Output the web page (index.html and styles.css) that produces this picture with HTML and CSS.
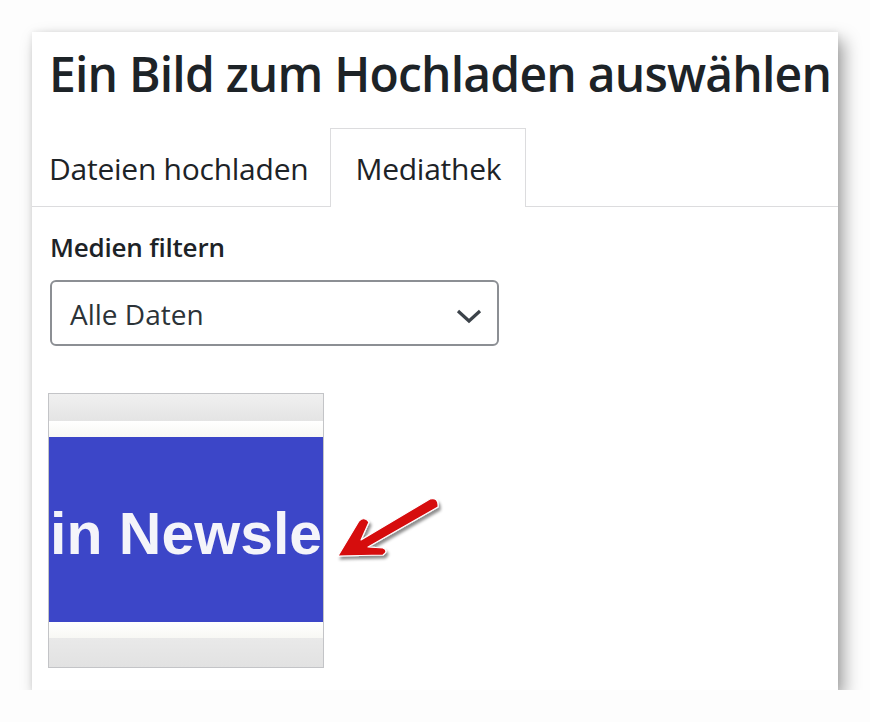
FILE: index.html
```html
<!DOCTYPE html>
<html lang="de">
<head>
    <meta charset="UTF-8">
    <title>Ein Bild zum Hochladen auswählen</title>
    <link rel="stylesheet" href="styles.css">
</head>
<body>

    <!-- Dialog -->
    <div class="dialog">
        <h1 class="title">Ein Bild zum Hochladen auswählen</h1>

        <!-- Tabs -->
        <div class="tabs">
            <div class="tab">Dateien hochladen</div>
            <div class="tab active">Mediathek</div>
        </div>

        <!-- Filter -->
        <div class="filter">
            <label class="filter-label">Medien filtern</label>
            <div class="select">
                <span>Alle Daten</span>
                <svg class="chevron" width="26" height="16" viewBox="0 0 26 16">
                    <path d="M2 3 L13 13 L24 3" fill="none" stroke="#3c434a" stroke-width="3.2"/>
                </svg>
            </div>
        </div>

        <!-- Media grid -->
        <div class="media">
            <div class="thumb">
                <div class="band gray"></div>
                <div class="band white"></div>
                <div class="band blue"><span>in Newsle</span></div>
                <div class="band white"></div>
                <div class="band gray bottom"></div>
            </div>
        </div>

        <svg class="arrow" width="120" height="80" viewBox="0 0 120 80">
            <defs>
                <filter id="shadow" x="-20%" y="-20%" width="150%" height="160%">
                    <feDropShadow dx="2" dy="3" stdDeviation="1.8" flood-color="#000" flood-opacity="0.45"/>
                </filter>
            </defs>
            <path d="M8 66 L29 31 Q34 26 39 32 L31 50 L100 9 Q109 7 108 17 L38 57 L53 58 Q59 61 53 65 Z"
                  fill="#d6070c" stroke="#fff" stroke-width="1.2" stroke-linejoin="round" filter="url(#shadow)"/>
        </svg>
    </div>

</body>
</html>
```

FILE: styles.css
```css
body { margin: 0; background: #fdfdfd; font-family: "Open Sans", "Noto Sans", sans-serif; color: #1d2327; }
.dialog { position: relative; margin: 32px 0 0 32px; width: 806px; height: 658px; background: #fff; box-shadow: 6px 8px 16px rgba(0,0,0,0.36), 0 0 6px rgba(0,0,0,0.08); }
.title { margin: 0; padding: 12px 0 0 17px; height: 96px; box-sizing: border-box; font-size: 48px; line-height: 60px; font-weight: 600; letter-spacing: -0.8px; white-space: nowrap; overflow: hidden; }
.tabs { display: flex; border-bottom: 1px solid #dcdcde; height: 79px; box-sizing: border-box; }
.tab { padding: 21px 17px 0; font-size: 30px; line-height: 40px; letter-spacing: -0.25px; color: #1d2327; }
.tab.active { margin-left: 5px; padding: 20px 24px 0; border: 1px solid #dcdcde; border-bottom: none; background: #fff; height: 79px; box-sizing: border-box; margin-bottom: -1px; }
.filter { padding: 23px 18px 0; }
.filter-label { display: block; font-size: 26px; font-weight: 600; line-height: 34px; letter-spacing: -0.2px; }
.select { margin-top: 16px; width: 449px; height: 66px; border: 2px solid #8c8f94; border-radius: 6px; box-sizing: border-box; display: flex; align-items: center; justify-content: space-between; padding: 0 15px 0 18px; font-size: 28px; color: #2c3338; }
.select span { margin-top: 2px; }
.chevron { margin-top: 6px; }
.media { padding: 47px 16px 0; }
.thumb { width: 276px; height: 275px; border: 1px solid #c3c4c7; box-sizing: border-box; display: flex; flex-direction: column; overflow: hidden; }
.band.gray { height: 27px; background: linear-gradient(#f0f0f0, #e4e4e4); }
.band.gray.bottom { flex: 1; background: linear-gradient(#e9e9e9, #e2e2e2); }
.band.white { height: 16px; background: linear-gradient(#ffffff, #f8f8f4); }
.band.blue { height: 185px; background: #3c46c8; display: flex; align-items: center; overflow: hidden; }
.band.blue span { font-family: "Liberation Sans", Arial, sans-serif; font-weight: bold; font-size: 59px; color: #f4f4fa; white-space: nowrap; margin-left: 1px; margin-top: 8px; }
.arrow { position: absolute; left: 298px; top: 458px; }
```
